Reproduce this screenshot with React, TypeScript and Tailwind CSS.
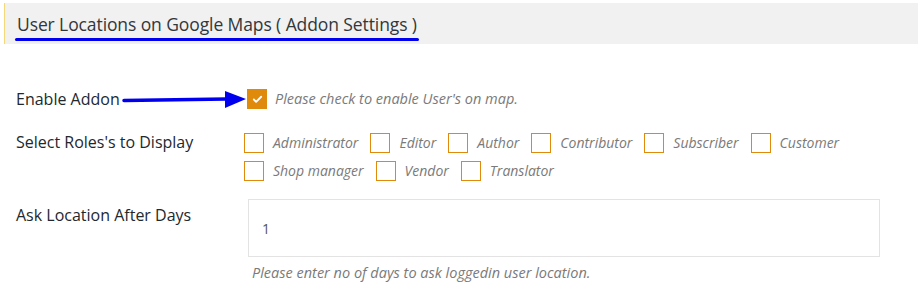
import { Check } from 'lucide-react';

const ROLES = ['Administrator', 'Editor', 'Author', 'Contributor', 'Subscriber', 'Customer', 'Shop manager', 'Vendor', 'Translator'];

function Box({ checked = false }: { checked?: boolean }) {
  return (
    <span className={`w-5 h-5 shrink-0 border-[1.5px] border-[#e08a0c] flex items-center justify-center ${checked ? 'bg-[#e08a0c]' : 'bg-white'}`}>
      {checked && <Check size={11} strokeWidth={4} className="text-white" />}
    </span>
  );
}

export default function App() {
  return (
    <div className="relative w-[918px] h-[300px] bg-white pt-[3px] font-['Open_Sans',sans-serif] text-[#23282d] overflow-hidden">
      {/* header */}
      <div className="ml-1 h-[41px] bg-[#f1f1f1] border-l border-[#f3d97a] flex items-center pl-3">
        <h1 className="relative text-[17.5px] leading-6 text-[#32373c] tracking-[-0.1px]">
          User Locations on Google Maps ( Addon Settings )
          <span className="absolute left-[-2px] right-[-2px] -bottom-[5px] h-[3px] rounded-full bg-[#0000ee]" />
        </h1>
      </div>

      <div className="grid grid-cols-[228px_1fr] px-4 text-[16px]">
        {/* enable */}
        <div className="mt-[45px] h-5 leading-5">Enable Addon</div>
        <div className="mt-[45px] h-5 flex items-center gap-2 pl-[3px]">
          <Box checked />
          <span className="italic text-[14.5px] leading-5 text-[#7a7a7a]">Please check to enable User's on map.</span>
        </div>

        {/* roles */}
        <div className="mt-[23px] leading-5">Select Roles's to Display</div>
        <div className="mt-[24px] flex flex-wrap gap-y-2 w-[636px]">
          {ROLES.map(r => (
            <label key={r} className="flex items-center mr-[12px]">
              <Box />
              <span className="ml-[9px] italic text-[14px] text-[#7a7a7a] leading-5">{r}</span>
            </label>
          ))}
        </div>

        {/* days */}
        <div className="mt-[24px] leading-5">Ask Location After Days</div>
        <div className="mt-[18px] pl-1">
          <div className="w-[632px] h-[58px] border border-[#e3e3e3] flex items-center px-[13px] text-[14px] text-[#555]">1</div>
          <p className="mt-[6px] pl-[4px] italic text-[14.5px] text-[#7a7a7a] leading-5">Please enter no of days to ask loggedin user location.</p>
        </div>
      </div>

      {/* annotation arrow */}
      <svg className="absolute left-[120px] top-[88px]" width="130" height="24" viewBox="0 0 130 24">
        <path d="M4 12.5 L107 11" stroke="#0000ee" strokeWidth="3.5" strokeLinecap="round" />
        <path d="M105 3 L126 11 L105 20 Z" fill="#0000ee" />
      </svg>
    </div>
  );
}
